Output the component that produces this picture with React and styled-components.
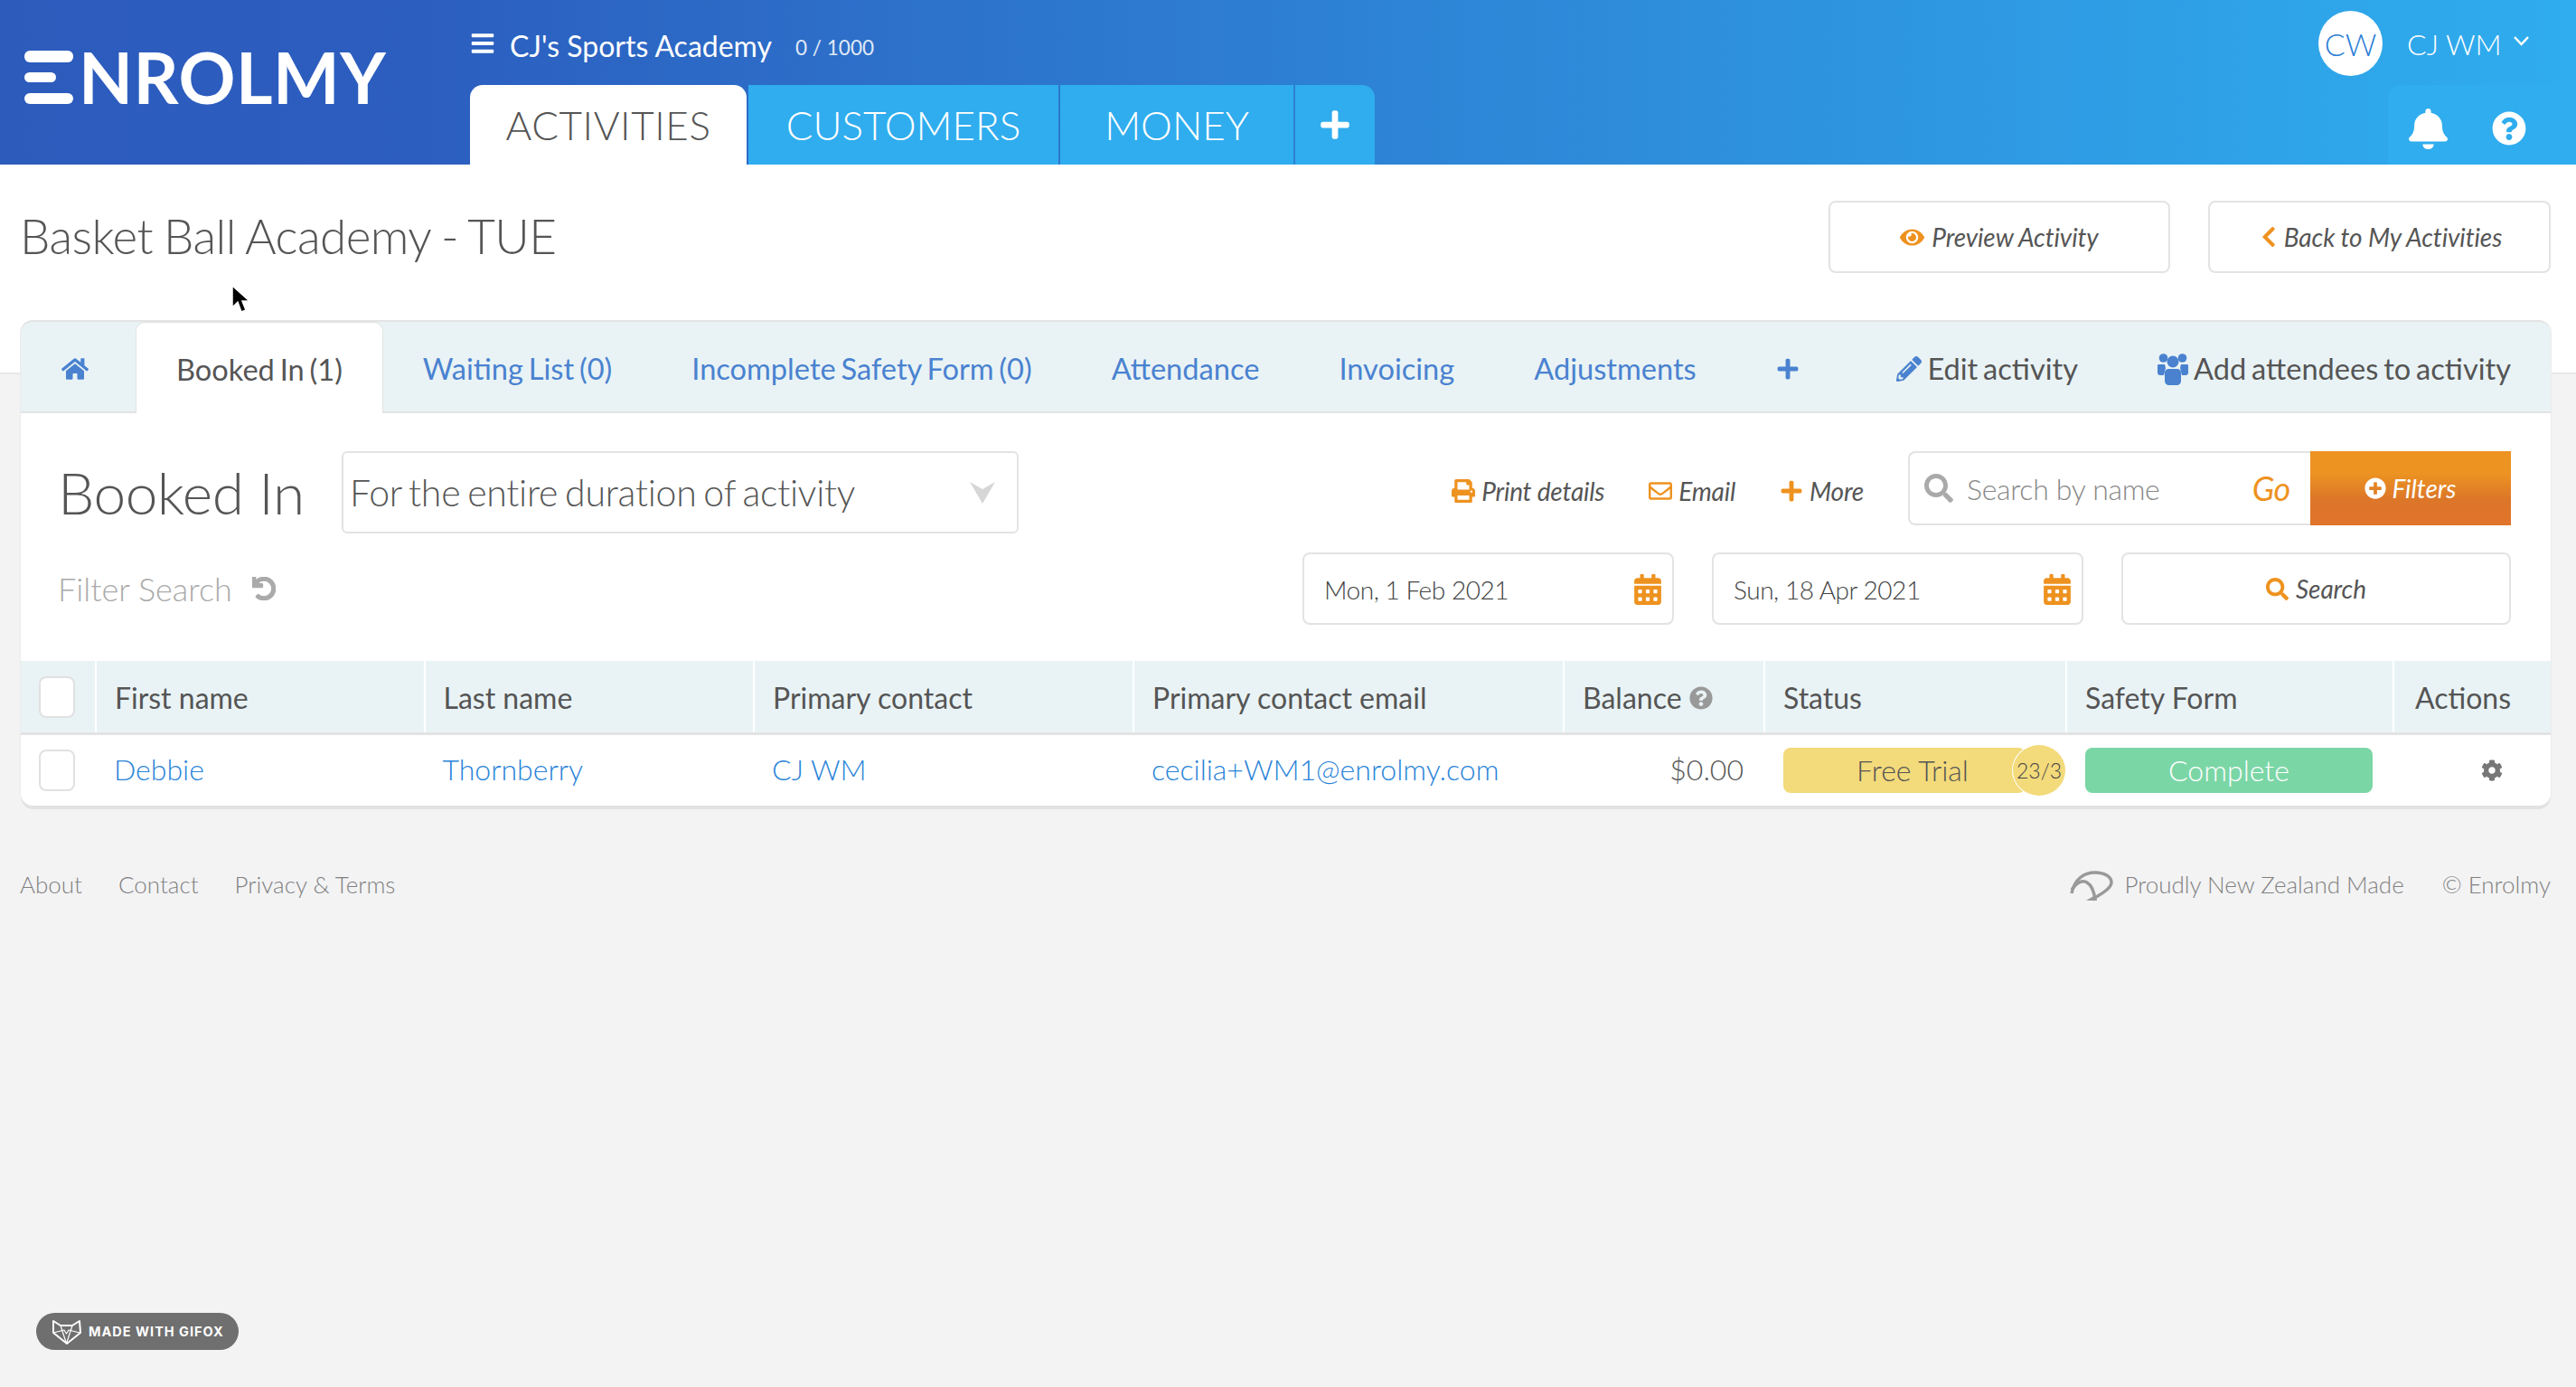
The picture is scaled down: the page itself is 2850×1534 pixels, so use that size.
import React from "react";
import styled, { createGlobalStyle, css } from "styled-components";
import {
  FaBars, FaBell, FaQuestionCircle, FaEye, FaChevronLeft, FaHome, FaPlus, FaPencilAlt,
  FaUndo, FaPrint, FaRegEnvelope, FaSearch, FaPlusCircle, FaCalendarAlt, FaCog,
} from "react-icons/fa";

const Global = createGlobalStyle`
  html, body { margin: 0; padding: 0; }
  body { background: #f3f3f4; font-family: Lato, "Liberation Sans", sans-serif; color: #555; }
  * { box-sizing: border-box; }
`;

const Page = styled.div`
  position: relative;
  width: 2850px;
  height: 1534px;
  overflow: hidden;
  background: linear-gradient(#fff 412px, #e8e8e8 412px, #e8e8e8 414px, #f3f3f4 414px);
`;

/* ---------- top bar ---------- */
const TopBar = styled.header`
  display: flex;
  height: 182px;
  background: linear-gradient(90deg, #2c5bbc 0%, #2c5ebf 16%, #2e93df 70%, #2fadee 100%);
`;
const LogoBlock = styled.div`
  width: 520px;
  flex: none;
  display: flex;
  align-items: flex-start;
  padding: 56px 0 0 27px;
  gap: 6px;
`;
const LogoMark = styled.svg`
  width: 54px;
  height: 59px;
  flex: none;
`;
const LogoText = styled.span`
  font-weight: 700;
  font-size: 78px;
  line-height: 59px;
  letter-spacing: 0.5px;
  color: #fff;
`;
const MidColumn = styled.div`
  flex: 1;
  display: flex;
  flex-direction: column;
`;
const AcademyRow = styled.div`
  height: 94px;
  display: flex;
  align-items: center;
  padding-top: 6px;
  color: #fff;
  & > svg { width: 28px; height: 28px; margin: -4px 16px 0 0; }
`;
const AcademyName = styled.span`
  font-size: 32px;
  font-weight: 400;
`;
const AcademyCount = styled.span`
  font-size: 22.500px;
  font-weight: 400;
  margin-left: 26px;
  margin-top: 4px;
  opacity: 0.85;
`;
const MainTabs = styled.nav`
  display: flex;
  height: 88px;
  gap: 2px;
`;
const MainTab = styled.div`
  display: flex;
  align-items: center;
  justify-content: center;
  width: ${(p) => p.$w}px;
  font-size: 44px;
  font-weight: 300;
  letter-spacing: ${(p) => (p.$active ? "0.6px" : "0")};
  color: ${(p) => (p.$active ? "#555" : "#fff")};
  background: ${(p) => (p.$active ? "#fff" : "#2fadee")};
  border-radius: ${(p) => p.$radius || "0"};
`;
const RightColumn = styled.div`
  width: 285px;
  flex: none;
  display: flex;
  flex-direction: column;
  align-items: flex-end;
`;
const UserRow = styled.div`
  height: 94px;
  display: flex;
  align-items: flex-start;
  width: 100%;
  padding-top: 12px;
  color: #fff;
`;
const Avatar = styled.div`
  width: 71px;
  height: 72px;
  border-radius: 50%;
  background: #fff;
  color: #2c7ed6;
  font-size: 34px;
  font-weight: 300;
  display: flex;
  align-items: center;
  justify-content: center;
  margin-right: 27px;
`;
const UserName = styled.span`
  font-size: 32px;
  font-weight: 300;
  line-height: 72px;
  margin-top: 1px;
`;
const UserCaret = styled.svg`
  width: 19px;
  height: 12px;
  margin: 27px 0 0 13px;
`;
const IconTabs = styled.div`
  display: flex;
  height: 88px;
  width: 208px;
  padding: 8px 28px 0 0;
  background: #2fadee;
  border-radius: 14px 0 0 0;
`;
const IconTab = styled.div`
  width: ${(p) => p.$w}px;
  display: flex;
  align-items: center;
  justify-content: center;
  color: #fff;
  & > svg { width: ${(p) => p.$sw}px; height: ${(p) => p.$sh}px; }
`;

/* ---------- title ---------- */
const TitleRow = styled.div`
  display: flex;
  justify-content: space-between;
  align-items: center;
  height: 172px;
  padding: 40px 28px 52px 22px;
`;
const Title = styled.h1`
  margin: 0 0 3px;
  font-size: 53px;
  font-weight: 300;
  letter-spacing: -0.55px;
  word-spacing: -2px;
  color: #555;
`;
const TitleButtons = styled.div`
  display: flex;
  gap: 42px;
`;
const OutlineButton = styled.div`
  display: flex;
  align-items: center;
  justify-content: center;
  gap: ${(p) => p.$gap || 8}px;
  width: ${(p) => p.$w}px;
  height: 80px;
  background: #fff;
  border: 2px solid #e3e3e3;
  border-radius: 8px;
  font-size: 28px;
  font-style: italic;
  letter-spacing: -0.1px;
  color: #555;
  & > svg { color: #ee921f; flex: none; }
`;

/* ---------- card ---------- */
const Card = styled.section`
  margin: 0 28px 0 23px;
  background: #fff;
  border-radius: 14px;
  box-shadow: 1px 0 0 #ececec, -1px 0 0 #ececec, 0 4px 0 #e2e2e2;
`;
const TabBar = styled.div`
  display: flex;
  align-items: stretch;
  height: 103px;
  padding-top: 2px;
  background: #e9f3f5;
  border-top: 2px solid #e3e3e3;
  border-bottom: 2px solid #e3e3e3;
  border-radius: 14px 14px 0 0;
`;
const TabLink = styled.div`
  display: flex;
  align-items: center;
  gap: 6px;
  padding: ${(p) => p.$pad || "2px 44px 0"};
  font-size: 32.600px;
  word-spacing: -2.500px;
  white-space: nowrap;
  color: ${(p) => (p.$dark ? "#555" : "#4a82d0")};
  & > svg { color: #4a82d0; flex: none; }
  ${(p) =>
    p.$active &&
    css`
      background: #fff;
      color: #555;
      border: 1px solid #e3e3e3;
      border-bottom: none;
      border-radius: 10px 10px 0 0;
      margin-bottom: -2px;
      margin-top: -2px;
    `}
`;
const TabRight = styled.div`
  display: flex;
  margin-left: auto;
`;
const Controls = styled.div`
  display: flex;
  justify-content: space-between;
  align-items: flex-start;
  height: ${(p) => p.$h}px;
  padding: ${(p) => p.$top}px 44px 0 41px;
`;
const ControlGroup = styled.div`
  display: flex;
  align-items: flex-start;
  gap: ${(p) => p.$gap ?? 0}px;
`;
const SectionHeading = styled.h2`
  width: 314px;
  margin: 0;
  font-size: 64px;
  font-weight: 300;
  letter-spacing: -0.5px;
  line-height: 91px;
  color: #555;
`;
const SelectBox = styled.div`
  width: 749px;
  height: 91px;
  display: flex;
  align-items: center;
  justify-content: space-between;
  padding: 0 24px 0 7px;
  border: 2px solid #e3e3e3;
  border-radius: 6px;
  font-size: 41px;
  font-weight: 300;
  letter-spacing: -0.25px;
  word-spacing: -3px;
  color: #555;
  & > svg { width: 28px; height: 24px; color: #d6d6d6; }
`;
const FilterSearch = styled.div`
  display: flex;
  align-items: center;
  gap: 22px;
  height: 80px;
  font-size: 36px;
  font-weight: 300;
  color: #aaa;
  & > svg { width: 26px; height: 26px; color: #aaa; }
`;
const ActionLink = styled.div`
  display: flex;
  align-items: center;
  gap: 7px;
  height: 82px;
  padding-top: 6px;
  font-size: 28px;
  font-style: italic;
  letter-spacing: -0.2px;
  color: #555;
  & > svg { color: #ee921f; width: 26px; height: 26px; }
`;
const SearchBox = styled.div`
  width: 667px;
  height: 82px;
  display: flex;
  border: 2px solid #e3e3e3;
  border-right: none;
  border-radius: 8px 0 0 8px;
`;
const SearchField = styled.div`
  flex: 1;
  display: flex;
  align-items: center;
  padding: 0 22px 0 16px;
  font-size: 32px;
  font-weight: 300;
  letter-spacing: -0.3px;
  color: #888;
  & > svg { width: 32px; height: 32px; color: #aaa; margin-right: 15px; }
`;
const GoLabel = styled.span`
  margin-left: auto;
  font-size: 36px;
  font-style: italic;
  font-weight: 400;
  color: #ee921f;
`;
const FiltersButton = styled.div`
  width: 222px;
  margin: -2px 0;
  display: flex;
  align-items: center;
  justify-content: center;
  gap: 6px;
  font-size: 28px;
  font-style: italic;
  color: #fff;
  background: linear-gradient(#ec9322 0%, #ec9322 30%, #dc7629 65%, #e0742b 100%);
  & > svg { width: 24px; height: 24px; }
`;
const DateField = styled.div`
  width: 411px;
  height: 80px;
  display: flex;
  align-items: center;
  justify-content: space-between;
  padding: 2px 12px 0 22px;
  border: 2px solid #e3e3e3;
  border-radius: 8px;
  font-size: 28px;
  font-weight: 300;
  letter-spacing: -0.450px;
  color: #444;
  & > svg { width: 30px; height: 34px; color: #ee921f; }
`;

/* ---------- table ---------- */
const gridColumns = "82px 363.5px 364.5px 420px 476px 222px 334px 362px 1fr";
const HeaderRow = styled.div`
  display: grid;
  grid-template-columns: ${gridColumns};
  height: 82px;
  background: #e9f3f5;
  border-bottom: 3px solid #e3e3e3;
`;
const BodyRow = styled.div`
  display: grid;
  grid-template-columns: ${gridColumns};
  height: 78px;
`;
const HeadCell = styled.div`
  display: flex;
  align-items: center;
  gap: 8px;
  padding: 2px 0 0 ${(p) => p.$padLeft ?? 20}px;
  font-size: 32px;
  color: #555;
  white-space: nowrap;
  border-left: 2px solid #fff;
  & > svg { width: 26px; height: 26px; color: #999; }
`;
const Cell = styled.div`
  display: flex;
  align-items: center;
  padding: 0 22px;
  font-size: 32px;
  font-weight: 300;
  color: #555;
  white-space: nowrap;
`;
const TextCell = styled(Cell)`
  padding: 0 ${(p) => (p.$end ? "22px" : "21px")} 3px 21px;
  justify-content: ${(p) => (p.$end ? "flex-end" : "flex-start")};
`;
const NameLink = styled.span`
  color: #2a84d8;
`;
const CheckBox = styled.div`
  width: 44px;
  height: 46px;
  margin-left: -2px;
  background: #fff;
  border: 2px solid #e1e1e1;
  border-radius: 8px;
`;
const StatusPill = styled.div`
  position: relative;
  width: 268px;
  height: 50px;
  padding: 0 0 2px 18px;
  display: flex;
  align-items: center;
  justify-content: center;
  background: #f3da7b;
  border-radius: 8px;
  font-size: 32px;
  font-weight: 300;
  color: #555;
  flex: none;
`;
const CountBubble = styled.span`
  position: absolute;
  right: -45px;
  top: -4px;
  width: 60px;
  height: 58px;
  display: flex;
  align-items: center;
  justify-content: center;
  border-radius: 50%;
  background: #f3da7b;
  border: 1px solid #fff;
  font-size: 23px;
  font-weight: 300;
  color: #444;
`;
const SafetyPill = styled.div`
  width: 318px;
  height: 50px;
  padding-bottom: 2px;
  display: flex;
  align-items: center;
  justify-content: center;
  background: #7bd6a6;
  border-radius: 8px;
  color: #fff;
  font-size: 32px;
  font-weight: 300;
`;
const GearIcon = styled(FaCog)`
  width: 24px;
  height: 24px;
  color: #777;
  margin-left: 76px;
`;

/* ---------- footer ---------- */
const Footer = styled.footer`
  display: flex;
  justify-content: space-between;
  align-items: center;
  padding: 67px 28px 0 22px;
  font-size: 26px;
  font-weight: 300;
  color: #808080;
`;
const FooterGroup = styled.div`
  display: flex;
  align-items: center;
  gap: ${(p) => p.$gap}px;
`;
const KoruIcon = styled.svg`
  width: 48px;
  height: 36px;
  margin: 4px -29px 0 0;
`;
const MadeBadge = styled.div`
  position: absolute;
  left: 40px;
  top: 1452px;
  height: 41px;
  width: 224px;
  display: flex;
  align-items: center;
  gap: 8px;
  padding-left: 17px;
  border-radius: 21px;
  background: #6f6f6f;
  color: #fff;
  font-family: Inter, "Open Sans", sans-serif;
  font-size: 14.500px;
  font-weight: 700;
  letter-spacing: 1px;
`;
const FoxIcon = styled.svg`
  width: 33px;
  height: 30px;
  flex: none;
`;
const Cursor = styled.svg`
  position: absolute;
  left: 254px;
  top: 314px;
  width: 22px;
  height: 33px;
`;

const columns = ["First name", "Last name", "Primary contact", "Primary contact email"];

const GroupIcon = () => (
  <svg width="34" height="36" viewBox="0 0 34 36" fill="currentColor">
    <circle cx="6.500" cy="6" r="4.800" />
    <circle cx="27.500" cy="6" r="4.800" />
    <circle cx="17" cy="10" r="6.500" />
    <path d="M1 13h7l1 4-2 8H3c-2 0-3-1-3-3v-6c0-2 0-3 1-3zM33 13h-7l-1 4 2 8h4c2 0 3-1 3-3v-6c0-2 0-3-1-3z" />
    <path d="M12 18h10c2 0 4 2 4 4v9c0 3-2 5-5 5h-8c-3 0-5-2-5-5v-9c0-2 2-4 4-4z" />
  </svg>
);

export default function App() {
  return (
    <Page>
      <Global />
      <TopBar>
        <LogoBlock>
          <LogoMark viewBox="0 0 54 59">
            <rect x="0" y="0" width="54" height="13" rx="6" fill="#fff" />
            <rect x="0" y="24" width="35" height="11" rx="5.500" fill="#fff" />
            <rect x="0" y="47" width="54" height="12" rx="6" fill="#fff" />
          </LogoMark>
          <LogoText>NROLMY</LogoText>
        </LogoBlock>
        <MidColumn>
          <AcademyRow>
            <FaBars />
            <AcademyName>CJ's Sports Academy</AcademyName>
            <AcademyCount>0 / 1000</AcademyCount>
          </AcademyRow>
          <MainTabs>
            <MainTab $active $w={306} $radius="14px 14px 0 0">ACTIVITIES</MainTab>
            <MainTab $w={343}>CUSTOMERS</MainTab>
            <MainTab $w={258}>MONEY</MainTab>
            <MainTab $w={88} $radius="0 14px 0 0"><FaPlus size={36} /></MainTab>
          </MainTabs>
        </MidColumn>
        <RightColumn>
          <UserRow>
            <Avatar>CW</Avatar>
            <UserName>CJ WM</UserName>
            <UserCaret viewBox="0 0 19 12" fill="none" stroke="#fff" strokeWidth="2.500">
              <path d="M2 2l7.500 8L17 2" />
            </UserCaret>
          </UserRow>
          <IconTabs>
            <IconTab $w={88} $sw={43} $sh={45}><FaBell preserveAspectRatio="none" /></IconTab>
            <IconTab $w={92} $sw={38} $sh={38}><FaQuestionCircle /></IconTab>
          </IconTabs>
        </RightColumn>
      </TopBar>

      <TitleRow>
        <Title>Basket Ball Academy - TUE</Title>
        <TitleButtons>
          <OutlineButton $w={378}><FaEye size={27} />Preview Activity</OutlineButton>
          <OutlineButton $w={379} $gap={4}><FaChevronLeft size={26} />Back to My Activities</OutlineButton>
        </TitleButtons>
      </TitleRow>

      <Card>
        <TabBar>
          <TabLink $pad="2px 52px 0 45px"><FaHome size={30} /></TabLink>
          <TabLink $active>Booked In (1)</TabLink>
          <TabLink>Waiting List (0)</TabLink>
          <TabLink>Incomplete Safety Form (0)</TabLink>
          <TabLink>Attendance</TabLink>
          <TabLink>Invoicing</TabLink>
          <TabLink>Adjustments</TabLink>
          <TabLink><FaPlus size={26} /></TabLink>
          <TabRight>
            <TabLink $dark><FaPencilAlt size={28} />Edit activity</TabLink>
            <TabLink $dark><GroupIcon />Add attendees to activity</TabLink>
          </TabRight>
        </TabBar>

        <Controls $h={154} $top={42}>
          <ControlGroup>
            <SectionHeading>Booked In</SectionHeading>
            <SelectBox>
              For the entire duration of activity
              <svg viewBox="0 0 28 24"><path d="M0 0l14 8 14-8-14 24z" fill="currentColor" /></svg>
            </SelectBox>
          </ControlGroup>
          <ControlGroup $gap={49}>
            <ActionLink><FaPrint />Print details</ActionLink>
            <ActionLink><FaRegEnvelope />Email</ActionLink>
            <ActionLink><FaPlus size={20} />More</ActionLink>
            <SearchBox>
              <SearchField>
                <FaSearch />
                Search by name
                <GoLabel>Go</GoLabel>
              </SearchField>
              <FiltersButton><FaPlusCircle />Filters</FiltersButton>
            </SearchBox>
          </ControlGroup>
        </Controls>

        <Controls $h={120} $top={0}>
          <FilterSearch>Filter Search<FaUndo stroke="currentColor" strokeWidth={30} /></FilterSearch>
          <ControlGroup $gap={42}>
            <DateField>Mon, 1 Feb 2021<FaCalendarAlt /></DateField>
            <DateField>Sun, 18 Apr 2021<FaCalendarAlt /></DateField>
            <OutlineButton $w={431}><FaSearch size={25} />Search</OutlineButton>
          </ControlGroup>
        </Controls>

        <HeaderRow>
          <Cell><CheckBox /></Cell>
          {columns.map((c) => <HeadCell key={c}>{c}</HeadCell>)}
          <HeadCell>Balance<FaQuestionCircle /></HeadCell>
          <HeadCell>Status</HeadCell>
          <HeadCell>Safety Form</HeadCell>
          <HeadCell $padLeft={23}>Actions</HeadCell>
        </HeaderRow>
        <BodyRow>
          <Cell><CheckBox /></Cell>
          <TextCell><NameLink>Debbie</NameLink></TextCell>
          <TextCell><NameLink>Thornberry</NameLink></TextCell>
          <TextCell><NameLink>CJ WM</NameLink></TextCell>
          <TextCell><NameLink>cecilia+WM1@enrolmy.com</NameLink></TextCell>
          <TextCell $end>$0.00</TextCell>
          <Cell>
            <StatusPill>Free Trial<CountBubble>23/3</CountBubble></StatusPill>
          </Cell>
          <Cell><SafetyPill>Complete</SafetyPill></Cell>
          <Cell><GearIcon /></Cell>
        </BodyRow>
      </Card>

      <Footer>
        <FooterGroup $gap={40}>
          <span>About</span>
          <span>Contact</span>
          <span>Privacy &amp; Terms</span>
        </FooterGroup>
        <FooterGroup $gap={42}>
          <KoruIcon viewBox="0 0 48 36" fill="none" stroke="#999" strokeWidth="3.500">
            <path d="M2 26C5 10 16 3 28 3c11 0 18 5 18 11 0 6-10 12-20 18" />
            <path d="M2 22c6-8 12-11 17-8 5 3 8 10 9 20" />
            <path d="M18 34h12l-2-6z" fill="#999" stroke="none" />
          </KoruIcon>
          <span>Proudly New Zealand Made</span>
          <span>© Enrolmy</span>
        </FooterGroup>
      </Footer>

      <Cursor viewBox="0 0 22 33">
        <path d="M3 2v24l6-6 4 11 5-2-4-10h8z" fill="#000" stroke="#fff" strokeWidth="1.500" />
      </Cursor>

      <MadeBadge>
        <FoxIcon viewBox="0 0 33 30" fill="none" stroke="#fff" strokeWidth="2" strokeLinejoin="round">
          <path d="M2 3l8 5h13l8-5 1 13-15 12L2 16z" />
          <path d="M10 8l6.500 20M23 8l-6.500 20M2 16l12-3 2.500 4 2.500-4 12 3" strokeWidth="1.200" />
        </FoxIcon>
        MADE WITH GIFOX
      </MadeBadge>
    </Page>
  );
}
